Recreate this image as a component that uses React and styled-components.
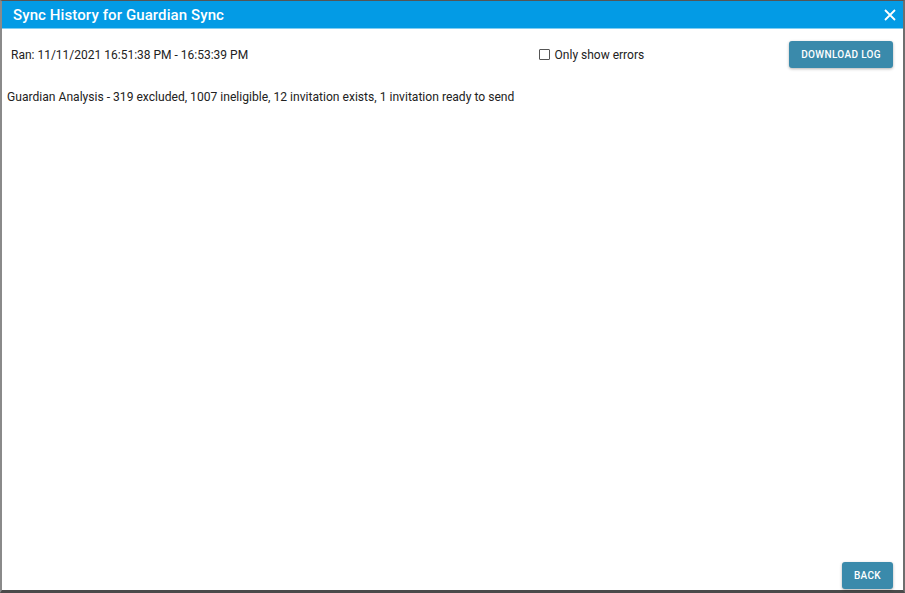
import React from 'react';
import styled, { createGlobalStyle } from 'styled-components';

const GlobalStyle = createGlobalStyle`
  html, body {
    margin: 0;
    padding: 0;
    background: #ffffff;
    font-family: Roboto, "Liberation Sans", Arial, sans-serif;
  }
  #root {
    height: 593px;
  }
`;

const Dialog = styled.div`
  box-sizing: border-box;
  width: 905px;
  height: 593px;
  display: flex;
  flex-direction: column;
  border-top: 1px solid #555;
  border-left: 2px solid #8a8a8a;
  border-right: 2px solid #6e6e6e;
  border-bottom: 3px solid #4a4a4a;
  background: #fff;
`;

const Header = styled.div`
  height: 27px;
  flex: none;
  display: flex;
  align-items: center;
  justify-content: space-between;
  padding: 0 6px 0 11px;
  background: #039be5;
  border-bottom: 1px solid #7fcdf2;
  color: #fff;
`;

const Title = styled.div`
  font-size: 15px;
  font-weight: 500;
  letter-spacing: 0.1px;
`;

const CloseButton = styled.button`
  border: 0;
  background: none;
  padding: 0;
  display: flex;
  color: #fff;
  cursor: pointer;
`;

const Body = styled.div`
  flex: 1;
  display: flex;
  flex-direction: column;
  padding: 12px 10px 0 5px;
  color: #222;
  font-size: 12px;
`;

const TopRow = styled.div`
  display: flex;
  align-items: center;
  height: 27px;
`;

const RanText = styled.div`
  flex: 1;
  padding-left: 4px;
`;

const CheckLabel = styled.label`
  display: flex;
  align-items: center;
  gap: 5px;
  margin-right: 145px;
  font-size: 12px;
  cursor: pointer;
`;

const CheckBox = styled.span`
  box-sizing: border-box;
  width: 11px;
  height: 11px;
  border: 1px solid #555;
  border-radius: 1px;
`;

const ActionButton = styled.button`
  height: 27px;
  padding: 0 12px;
  border: 0;
  border-radius: 3px;
  background: #3a8aab;
  color: #fff;
  font-family: Roboto, "Liberation Sans", Arial, sans-serif;
  font-size: 10px;
  font-weight: 500;
  letter-spacing: 0.35px;
  box-shadow: 0 1px 3px rgba(0, 0, 0, 0.3);
  cursor: pointer;
`;

const Summary = styled.div`
  margin-top: 22px;
  line-height: 15px;
  font-size: 12.1px;
`;

const Footer = styled.div`
  margin-top: auto;
  display: flex;
  justify-content: flex-end;
  padding-bottom: 1px;
`;

const App = () => {
  return (
    <>
      <GlobalStyle />
      <Dialog>
        <Header>
          <Title>Sync History for Guardian Sync</Title>
          <CloseButton aria-label="close">
            <svg width="14" height="14" viewBox="0 0 14 14">
              <path d="M2 2 L12 12 M12 2 L2 12" stroke="#fff" strokeWidth="1.8" />
            </svg>
          </CloseButton>
        </Header>
        <Body>
          <TopRow>
            <RanText>Ran: 11/11/2021 16:51:38 PM - 16:53:39 PM</RanText>
            <CheckLabel>
              <CheckBox />
              Only show errors
            </CheckLabel>
            <ActionButton>DOWNLOAD LOG</ActionButton>
          </TopRow>
          <Summary>
            Guardian Analysis - 319 excluded, 1007 ineligible, 12 invitation exists, 1 invitation ready to send
          </Summary>
          <Footer>
            <ActionButton>BACK</ActionButton>
          </Footer>
        </Body>
      </Dialog>
    </>
  );
};

export default App;
